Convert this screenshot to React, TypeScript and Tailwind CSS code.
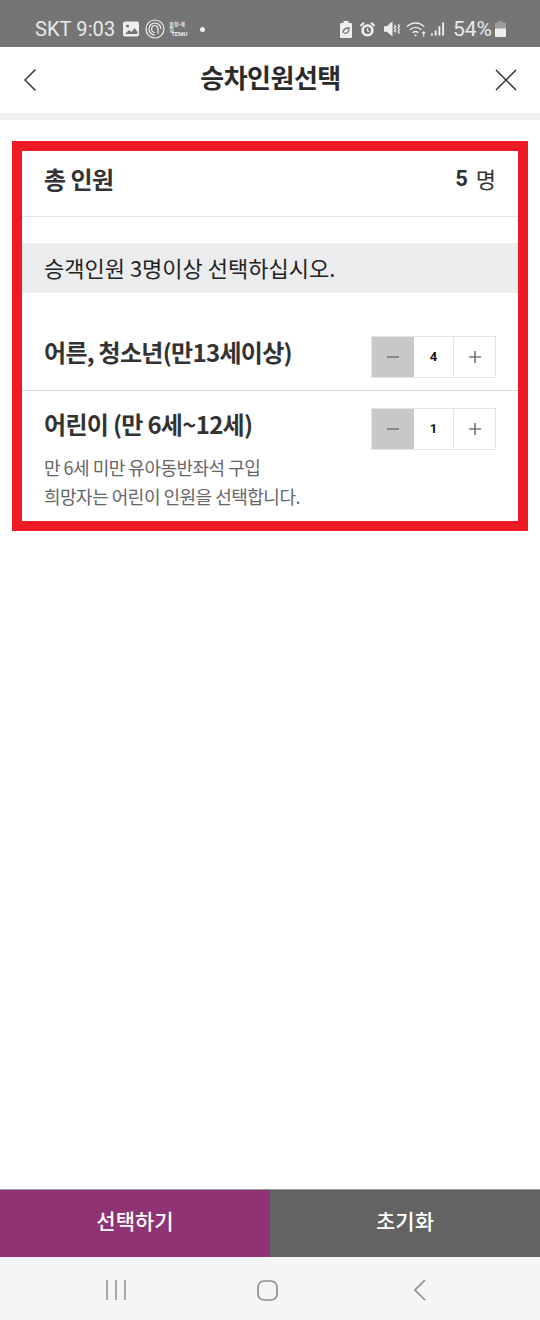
import React from 'react';

const Stepper = ({ value }: { value: number }) => (
    <div className="flex h-[42px] w-[125px] shrink-0 border border-[#e4e4e4]">
        <div className="w-[42px] bg-[#c8c8c8] flex items-center justify-center">
            <svg width="12" height="2" viewBox="0 0 12 2"><path d="M0 1h12" stroke="#858585" strokeWidth="1.8" /></svg>
        </div>
        <div className="flex-1 flex items-center justify-center text-[13px] font-bold text-[#111] border-r border-[#e4e4e4]" style={{ fontFamily: 'Roboto, sans-serif' }}>{value}</div>
        <div className="w-[41px] flex items-center justify-center">
            <svg width="12" height="12" viewBox="0 0 12 12"><path d="M0 6h12M6 0v12" stroke="#7a7a7a" strokeWidth="1.7" /></svg>
        </div>
    </div>
);

export default function App() {
    return (
        <div className="w-[540px] h-[1320px] flex flex-col bg-white overflow-hidden" style={{ fontFamily: '"Noto Sans CJK KR", Roboto, sans-serif' }}>
            {/* Status Bar */}
            <div className="h-[47px] shrink-0 bg-[#757575] flex items-center justify-between pl-[35px] pr-[34px] pt-[11px] text-[#e9e9e9]">
                <div className="flex items-center">
                    <span className="text-[20px] leading-none tracking-[0.1px]" style={{ fontFamily: 'Roboto, sans-serif' }}>SKT 9:03</span>
                    <svg className="ml-[8px]" width="16" height="16" viewBox="0 0 16 16">
                        <rect width="16" height="15" y="0.5" rx="2" fill="#eee" />
                        <circle cx="4.5" cy="5" r="1.6" fill="#757575" />
                        <path d="M2 13l4-4 2.5 2 3-4 3 4v2z" fill="#757575" />
                    </svg>
                    <svg className="ml-[6px]" width="20" height="20" viewBox="0 0 20 20" fill="none" stroke="#eee" strokeWidth="1.2">
                        <circle cx="10" cy="10" r="9" />
                        <path d="M10 16a6 6 0 1 1 6-6" />
                        <path d="M10 13.500a3.200 3.500 0 1 1 3-3.500v5" />
                    </svg>
                    <div className="ml-[4px] flex flex-col items-center leading-none text-[6px] font-bold w-[20px]">
                        <span className="text-[5px]">흥청-세일</span>
                        <span style={{ fontFamily: 'Roboto, sans-serif' }}>TEMU</span>
                    </div>
                    <div className="ml-[11px] w-[5px] h-[5px] rounded-full bg-[#eee]"></div>
                </div>
                <div className="flex items-center">
                    <svg width="12" height="17" viewBox="0 0 12 17">
                        <path d="M3.5 0h5v2H11a1 1 0 0 1 1 1v13a1 1 0 0 1-1 1H1a1 1 0 0 1-1-1V3a1 1 0 0 1 1-1h2.5z" fill="#eee" />
                        <path d="M3 12c0-4 3-5 6-5 0 4-2 6-5 5" stroke="#757575" strokeWidth="1.3" fill="none" />
                    </svg>
                    <svg className="ml-[8px]" width="15" height="17" viewBox="0 0 17 17">
                        <circle cx="8.5" cy="9.5" r="5.5" fill="none" stroke="#eee" strokeWidth="3" />
                        <path d="M8.500 7v3l2 1" stroke="#eee" strokeWidth="1.300" fill="none" />
                        <path d="M0.500 4.500L4.500 0.800M16.500 4.500L12.500 0.800" stroke="#eee" strokeWidth="2.500" />
                    </svg>
                    <svg className="ml-[9px]" width="16" height="16" viewBox="0 0 17 16">
                        <path d="M0 5h3l6-5v16l-6-5H0z" fill="#eee" />
                        <path d="M11 4l1.500 1.500L11 7l1.500 1.500L11 10l1.500 1.500M15 3l1.500 2L15 7l1.500 2L15 11l1.500 2" stroke="#eee" strokeWidth="1.300" fill="none" />
                    </svg>
                    <svg className="ml-[6px]" width="22" height="18" viewBox="0 0 23 18" fill="none" stroke="#eee" strokeWidth="1.400">
                        <path d="M1 6.500C6 1.500 14 1.500 19 6.500" />
                        <path d="M4 9.800C7.500 6.500 12.500 6.500 16 9.800" />
                        <path d="M7 13c2-1.800 4-1.800 6 0" />
                        <circle cx="10" cy="15.500" r="1" fill="#eee" stroke="none" />
                        <path d="M18.500 17v-5M16.800 13.500l1.700-1.700 1.700 1.700" strokeWidth="1.100" />
                    </svg>
                    <svg className="ml-[3px]" width="14" height="16" viewBox="0 0 15 16" fill="#eee">
                        <rect x="0" y="12.500" width="2" height="2.500" />
                        <rect x="4" y="9.500" width="2" height="5.500" />
                        <rect x="8" y="5" width="2" height="10" />
                        <rect x="12" y="1" width="2" height="14" />
                    </svg>
                    <span className="ml-[8px] text-[21px] leading-none" style={{ fontFamily: 'Roboto, sans-serif' }}>54%</span>
                    <svg className="ml-[3px]" width="11" height="16" viewBox="0 0 11 16">
                        <path d="M3.500 0h4v1.500H10a1 1 0 0 1 1 1V15a1 1 0 0 1-1 1H1a1 1 0 0 1-1-1V2.500a1 1 0 0 1 1-1h2.500z" fill="#9d9d9d" />
                        <path d="M0 7.500h11V15a1 1 0 0 1-1 1H1a1 1 0 0 1-1-1z" fill="#eee" />
                    </svg>
                </div>
            </div>

            {/* Header */}
            <div className="h-[66px] shrink-0 flex items-center justify-between pl-[24px] pr-[23px]">
                <div className="w-[22px]">
                    <svg width="12" height="22" viewBox="0 0 12 22" fill="none" stroke="#333" strokeWidth="1.500"><path d="M11.500 0.500L1 11l10.500 10.500" /></svg>
                </div>
                <h1 className="text-[26px] font-bold text-[#2b2b2b] tracking-[-0.5px] leading-none pb-[6px]">승차인원선택</h1>
                <svg width="22" height="22" viewBox="0 0 22 22" fill="none" stroke="#333" strokeWidth="1.500"><path d="M1 1l20 20M21 1L1 21" /></svg>
            </div>
            <div className="h-[7px] shrink-0 bg-[#eeeff1]"></div>

            {/* Content */}
            <div className="flex-1 pt-[21px] px-[12px]">
                <div className="h-[390px] border-[10px] border-[#ed1c24]">
                    <div className="h-[66px] flex items-center justify-between pl-[22px] pr-[22px] pb-[10px] border-b border-[#e8e8e8]">
                        <span className="text-[24px] font-bold text-[#333] tracking-[-0.5px]">총 인원</span>
                        <div className="flex items-center text-[22px] text-[#333]">
                            <span className="font-bold" style={{ fontFamily: 'Roboto, sans-serif' }}>5</span>
                            <span className="ml-[8px]">명</span>
                        </div>
                    </div>
                    <div className="mt-[26px] h-[50px] bg-[#ebecee] flex items-center pl-[22px] pb-[2px] text-[22px] text-[#222]">
                        승객인원 3명이상 선택하십시오.
                    </div>
                    <div className="h-[98px] flex items-end justify-between pl-[22px] pr-[22px] pb-[12px] border-b border-[#dddddd]">
                        <span className="text-[24px] h-[42px] flex items-center pb-[10px] font-bold text-[#333] tracking-[-0.7px]">어른, 청소년(만13세이상)</span>
                        <Stepper value={4} />
                    </div>
                    <div className="pt-[17px] pl-[22px] pr-[22px]">
                        <div className="flex items-center justify-between">
                            <span className="text-[24px] h-[42px] flex items-center pb-[10px] font-bold text-[#333] tracking-[-0.7px]">어린이 (만 6세~12세)</span>
                            <Stepper value={1} />
                        </div>
                        <p className="text-[18px] leading-[29px] text-[#666] tracking-[-0.5px] mt-[3px]">
                            만 6세 미만 유아동반좌석 구입<br />희망자는 어린이 인원을 선택합니다.
                        </p>
                    </div>
                </div>
            </div>

            {/* Bottom Buttons */}
            <div className="h-[68px] shrink-0 flex border-t border-[#999] text-[21px] font-medium text-white">
                <div className="w-1/2 bg-[#8f3374] flex items-center justify-center pb-[6px]">선택하기</div>
                <div className="w-1/2 bg-[#636363] flex items-center justify-center pb-[6px]">초기화</div>
            </div>

            {/* Nav Bar */}
            <div className="h-[63px] shrink-0 bg-[#f5f5f8] flex items-center pt-[3px]">
                <div className="w-[257px] flex justify-start pl-[106px]">
                    <svg width="20" height="20" viewBox="0 0 20 20" stroke="#8e8e8e" strokeWidth="1.500"><path d="M1 0v20M10 0v20M19 0v20" /></svg>
                </div>
                <svg width="21" height="21" viewBox="0 0 21 21" fill="none" stroke="#8e8e8e" strokeWidth="1.700"><rect x="1" y="1" width="19" height="19" rx="6" /></svg>
                <svg className="ml-[135px]" width="13" height="22" viewBox="0 0 13 22" fill="none" stroke="#8e8e8e" strokeWidth="1.700"><path d="M12 1L2 11l10 10" /></svg>
            </div>
        </div>
    );
}
